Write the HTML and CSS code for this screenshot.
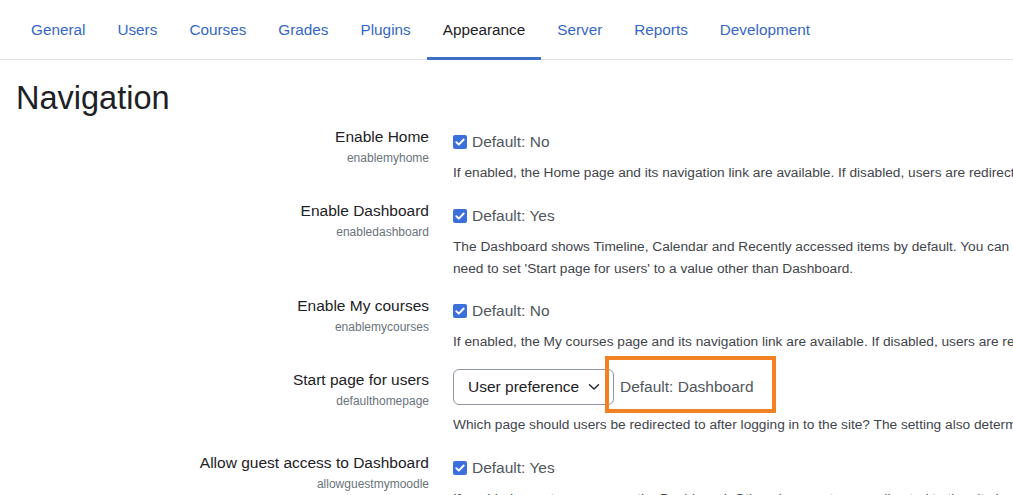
FILE: index.html
```html
<!DOCTYPE html>
<html lang="en">
<head>
<meta charset="utf-8">
<title>Navigation - Appearance</title>
<link rel="stylesheet" href="styles.css">
</head>
<body>
<nav class="tabs">
  <a class="tab" href="#">General</a>
  <a class="tab" href="#">Users</a>
  <a class="tab" href="#">Courses</a>
  <a class="tab" href="#">Grades</a>
  <a class="tab" href="#">Plugins</a>
  <a class="tab tab-active" href="#">Appearance</a>
  <a class="tab" href="#">Server</a>
  <a class="tab" href="#">Reports</a>
  <a class="tab" href="#">Development</a>
</nav>

<main class="page">
  <h2 class="page-title">Navigation</h2>

  <div class="setting">
    <div class="setting-label">
      <div class="label-text">Enable Home</div>
      <div class="setting-name">enablemyhome</div>
    </div>
    <div class="setting-control">
      <div class="control-line">
        <span class="checkbox"><svg viewBox="0 0 14 14" width="14" height="14"><path d="M3.3 7.2l2.5 2.5 4.9-5.2" fill="none" stroke="#fff" stroke-width="1.9" stroke-linecap="round" stroke-linejoin="round"/></svg></span>
        <span class="default-text">Default: No</span>
      </div>
      <div class="description">If enabled, the Home page and its navigation link are available. If disabled, users are redirected to the Dashboard or My courses page.</div>
    </div>
  </div>

  <div class="setting">
    <div class="setting-label">
      <div class="label-text">Enable Dashboard</div>
      <div class="setting-name">enabledashboard</div>
    </div>
    <div class="setting-control">
      <div class="control-line">
        <span class="checkbox"><svg viewBox="0 0 14 14" width="14" height="14"><path d="M3.3 7.2l2.5 2.5 4.9-5.2" fill="none" stroke="#fff" stroke-width="1.9" stroke-linecap="round" stroke-linejoin="round"/></svg></span>
        <span class="default-text">Default: Yes</span>
      </div>
      <div class="description description-tight">The Dashboard shows Timeline, Calendar and Recently accessed items by default. You can set the Dashboard as the start page for users. To disable the Dashboard you also<br>need to set 'Start page for users' to a value other than Dashboard.</div>
    </div>
  </div>

  <div class="setting">
    <div class="setting-label">
      <div class="label-text">Enable My courses</div>
      <div class="setting-name">enablemycourses</div>
    </div>
    <div class="setting-control">
      <div class="control-line">
        <span class="checkbox"><svg viewBox="0 0 14 14" width="14" height="14"><path d="M3.3 7.2l2.5 2.5 4.9-5.2" fill="none" stroke="#fff" stroke-width="1.9" stroke-linecap="round" stroke-linejoin="round"/></svg></span>
        <span class="default-text">Default: No</span>
      </div>
      <div class="description">If enabled, the My courses page and its navigation link are available. If disabled, users are redirected to the Home page or the Dashboard.</div>
    </div>
  </div>

  <div class="setting">
    <div class="setting-label">
      <div class="label-text">Start page for users</div>
      <div class="setting-name">defaulthomepage</div>
    </div>
    <div class="setting-control">
      <div class="control-line control-line-select">
        <div class="select">
          <span class="select-value">User preference</span>
          <svg class="select-chevron" viewBox="0 0 12 8" width="12" height="8"><path d="M1.5 1.8l4.5 4.3 4.5-4.3" fill="none" stroke="#1d2125" stroke-width="1.4" stroke-linecap="round" stroke-linejoin="round"/></svg>
        </div>
        <span class="default-text default-highlight">Default: Dashboard</span>
      </div>
      <div class="description description-select">Which page should users be redirected to after logging in to the site? The setting also determines the first link in the navigation.</div>
    </div>
  </div>

  <div class="setting">
    <div class="setting-label">
      <div class="label-text">Allow guest access to Dashboard</div>
      <div class="setting-name">allowguestmymoodle</div>
    </div>
    <div class="setting-control">
      <div class="control-line">
        <span class="checkbox"><svg viewBox="0 0 14 14" width="14" height="14"><path d="M3.3 7.2l2.5 2.5 4.9-5.2" fill="none" stroke="#fff" stroke-width="1.9" stroke-linecap="round" stroke-linejoin="round"/></svg></span>
        <span class="default-text">Default: Yes</span>
      </div>
      <div class="description">If enabled, guests can access the Dashboard. Otherwise guests are redirected to the site home page.</div>
    </div>
  </div>
</main>
</body>
</html>
```

FILE: styles.css
```css
html, body {
  margin: 0;
  overflow: hidden;
  background: #fff;
}

body {
  font-family: "Liberation Sans", Arial, sans-serif;
  color: #1d2125;
}

/* Secondary navigation tabs */
.tabs {
  display: flex;
  padding-left: 15px;
  border-bottom: 1px solid #dee2e6;
  min-width: 1400px;
}

.tab {
  display: block;
  padding: 18px 16px 17px;
  font-size: 15.3px;
  line-height: 24px;
  color: #3567c4;
  text-decoration: none;
}

.tab-active {
  color: #1d2125;
  padding-bottom: 15px;
  border-bottom: 3px solid #3d6fc6;
  margin-bottom: -1px;
}

/* Settings page */
.page {
  padding-left: 16px;
  min-width: 1600px;
}

.page-title {
  margin: 19px 0 7px;
  font-size: 32.5px;
  font-weight: 400;
  line-height: 1.2;
  color: #1d2125;
}

.setting {
  display: grid;
  grid-template-columns: 413px 1fr;
  column-gap: 24px;
  padding-bottom: 15px;
}

.setting-label {
  text-align: right;
}

.label-text {
  font-size: 15.5px;
  line-height: 24px;
  color: #1d2125;
}

.setting-name {
  font-size: 12px;
  line-height: 18px;
  color: #6a737b;
}

.control-line {
  display: flex;
  align-items: center;
  height: 24px;
  margin-top: 5px;
}

.control-line-select {
  height: 36px;
  margin-top: 1px;
}

.checkbox {
  display: flex;
  width: 14px;
  height: 14px;
  border-radius: 2px;
  background: #3b6fda;
  margin-right: 5px;
}

.default-text {
  font-size: 15.5px;
  line-height: 24px;
  color: #50565c;
}

.select {
  display: flex;
  align-items: center;
  box-sizing: border-box;
  width: 161px;
  height: 36px;
  padding: 0 13px 0 14px;
  border: 1px solid #8f959e;
  border-radius: 6px;
  font-size: 15.5px;
  color: #1d2125;
}

.select-value {
  flex: 1;
}

.select-chevron {
  display: block;
}

.default-highlight {
  position: relative;
  margin-left: 6px;
}

/* Highlight frame around the default value */
.default-highlight::before {
  content: "";
  position: absolute;
  left: -15px;
  top: -19px;
  width: 163px;
  height: 49px;
  border: 4px solid #f28123;
}

.description {
  margin-top: 8px;
  font-size: 13.7px;
  line-height: 22px;
  color: #3f454b;
  white-space: nowrap;
}

.description-tight {
  margin-bottom: -1px;
}

.description-select {
  margin-top: 9px;
}
```
